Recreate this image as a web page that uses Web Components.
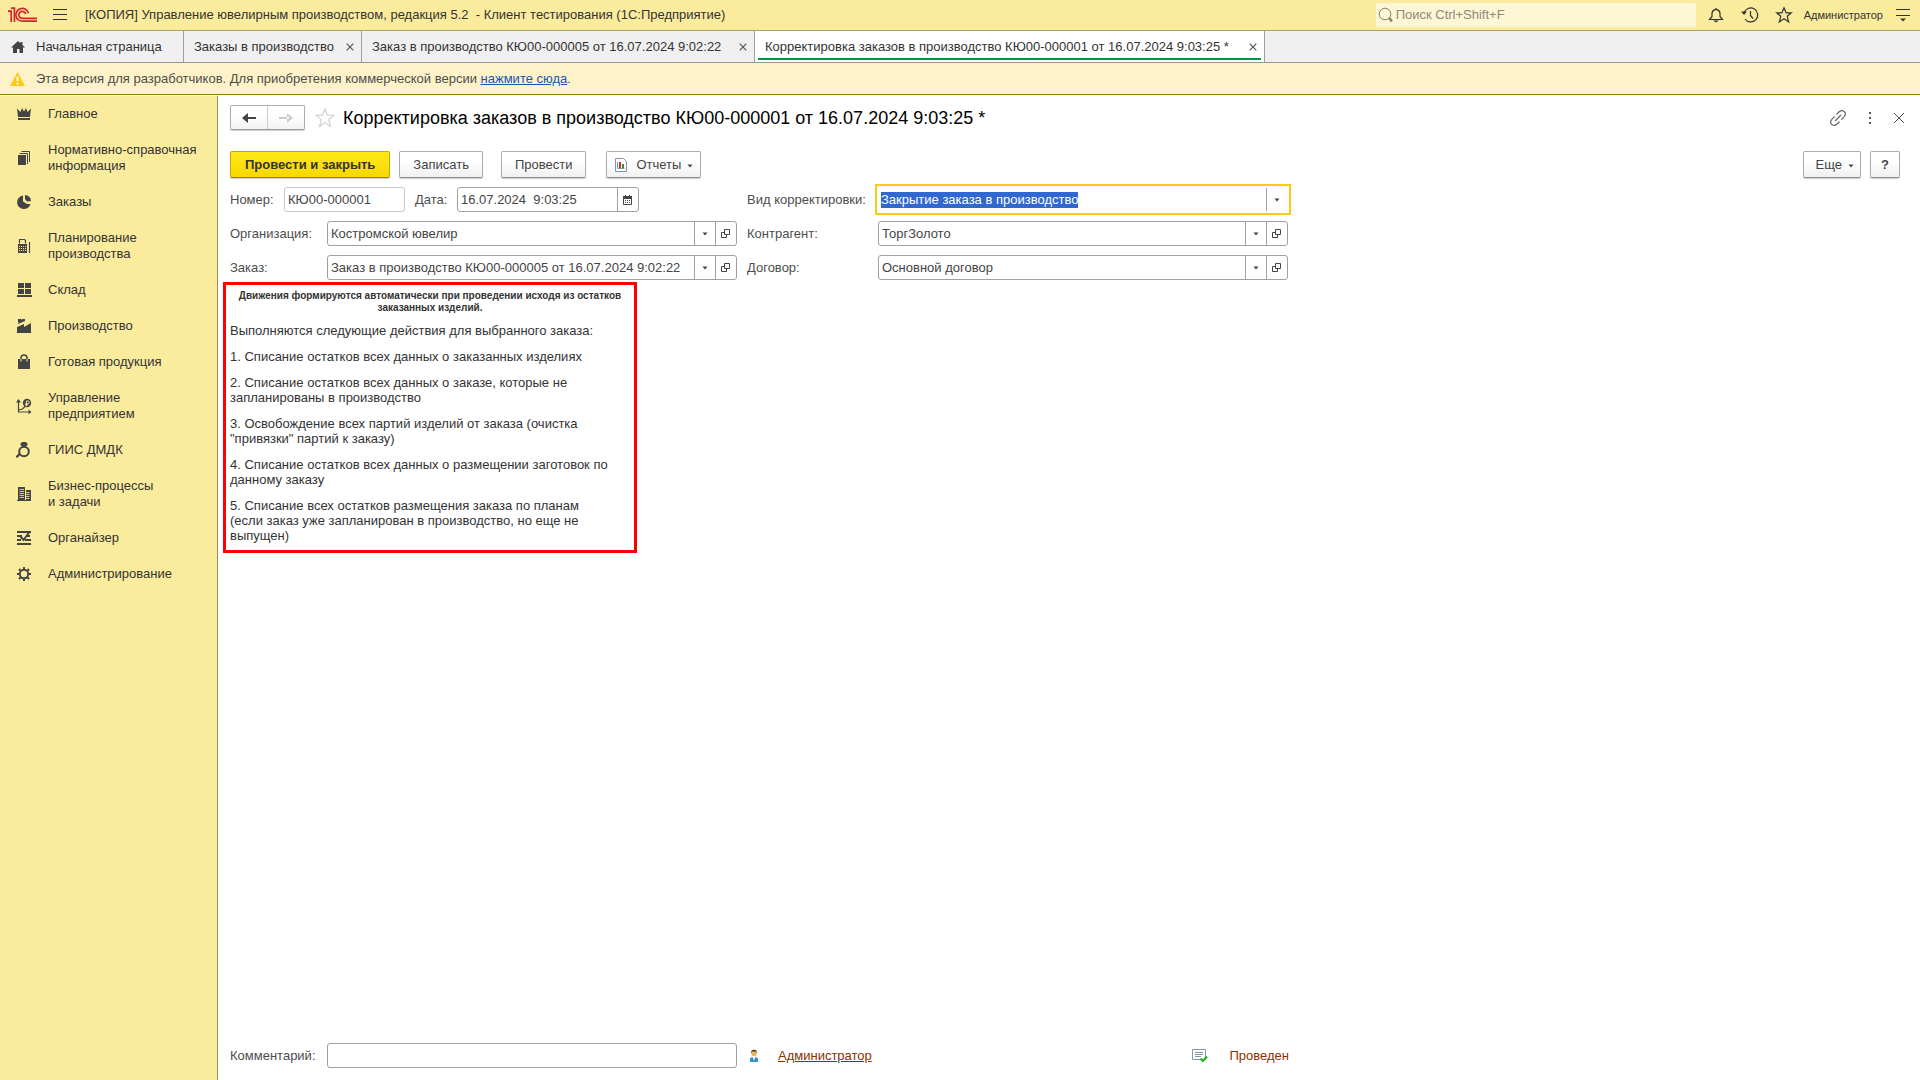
<!DOCTYPE html>
<html lang="ru">
<head>
<meta charset="utf-8">
<title>Корректировка заказов в производство</title>
<style>
html, body { height: 100%; margin: 0; }
body { font: 13px/16px "Liberation Sans", Arial, sans-serif; color: #333; background: #fff; }
</style>
</head>
<body>
<erp-app></erp-app>
<script>
const ICONS = {
  logo: [30, 16, '<g fill="none" stroke="#d8232a" stroke-width="1.7"><path d="M0 4.2h3.2V15M3 1.2h3.4V15"/><path d="M20.5 6.3A6.4 6.4 0 1 0 15 14.2H29"/><path d="M17.7 7.2A3.5 3.5 0 1 0 15 11.3H29"/></g>'],
  menu: [14, 12, '<path d="M0 .5h14M0 5.500h14M0 10.500h14" stroke="#333" fill="none"/>'],
  home: [16, 14, '<path fill="#444" d="M8 1 1 7.500h2V13h4V9h2.500v4H13V7.500h2L12.500 5V2h-2v1.300z"/>'],
  warn: [16, 14, '<path fill="#fccb1a" d="M7.500 0 15 14H0z"/><path d="M7.500 4.500v4.500M7.500 10.500v2" stroke="#fff" stroke-width="1.8"/>'],
  search: [16, 16, '<g fill="none" stroke="#85806a"><circle cx="7" cy="7" r="5.800"/><path d="m11 11 3 3.500" stroke-width="2.400"/></g>'],
  bell: [16, 16, '<path d="M1.500 12.500h13l-2.500-3V6.500C12 4 10 3 8.800 2.700a.8.8 0 0 0-1.600 0C6 3 4 4 4 6.500v3z" fill="none" stroke="#333" stroke-width="1.200"/><path d="M5 13.500h6L8 15.500z" fill="#333"/>'],
  history: [18, 16, '<path d="M3 6a7 7 0 1 1 1 6M9.500 4v4.500l2.500 3" fill="none" stroke="#333" stroke-width="1.200"/><path d="M0 4.500h6L3 8z" fill="#333"/>'],
  star: [18, 18, '<path d="m9 1.800 2.100 5h5.200l-4.100 3.500 1.500 5.600L9 12.800l-4.700 3.100 1.500-5.600L1.700 6.800h5.200z" fill="none" stroke="#333" stroke-width="1.200"/>'],
  starPale: [22, 22, '<path d="m11 2 2.400 6.300h6.300l-5 4.300 1.800 6.900L11 15.600l-5.500 3.900 1.800-6.900-5-4.300h6.300z" fill="none" stroke="#ccc" stroke-width="1.100"/>'],
  more: [14, 14, '<path d="M0 1.500h14M0 7.500h14" stroke="#333" stroke-width="1.200"/><path d="M4 10.500h6l-3 3z" fill="#333"/>'],
  link: [18, 18, '<g fill="none" stroke="#666" stroke-width="1.200"><path d="m7.500 5.500 2.700-2.700c3.600-3.300 8.200 1.200 5 4.800l-3 3M10.500 12.500l-2.700 2.700c-3.600 3.300-8.200-1.200-5-4.800l3-3M6 12l6-6"/></g>'],
  dots: [4, 12, '<path d="M1 0h2v2H1zM1 5h2v2H1zM1 10h2v2H1z" fill="#555"/>'],
  close: [12, 12, '<path d="m1 1 10 10M11 1 1 11" stroke="#555"/>'],
  x: [8, 8, '<path d="m.7.7 6.600 6.600M7.300.7.7 7.300" stroke="#555" stroke-width="1.200"/>'],
  back: [16, 12, '<path d="M1 6 7 1v10zM5 5h10v2H5z" fill="#444"/>'],
  forward: [16, 12, '<path d="m15 6-6-5v10zM1 5h10v2H1z" fill="#ccc"/>'],
  report: [14, 14, '<path d="M1.500.5h8l3 3v10h-11z" fill="#fff" stroke="#8494a4"/><path d="M3.500 4v6.500h7" fill="none" stroke="#8494a4"/><path d="M5 4h2v6H5z" fill="#e02a20"/><path d="M8 6h2v4H8z" fill="#1e9a28"/>'],
  down: [6, 4, '<path d="M.5.5h5L3 3.500z" fill="#444"/>'],
  calendar: [10, 10, '<path d="M.5 1.500h8v8h-8z" fill="none" stroke="#444"/><path d="M0 1h9v3H0zM2 0h1v2H2zM6 0h1v2H6zM2 5h1v1H2zM4 5h1v1H4zM6 5h1v1H6zM2 7h1v1H2zM4 7h1v1H4zM6 7h1v1H6z" fill="#444"/>'],
  open: [10, 10, '<path d="M3.500.5h5v5h-5z M3 3.500H.5v5h5V6" fill="none" stroke="#444"/>'],
  user: [14, 14, '<path d="M3 13V9.500L5 8h4l2 1.500V13z" fill="#3a8fc4"/><path d="m5.500 8 1.500 3.500L8.500 8z" fill="#fff"/><circle cx="7" cy="4.500" r="2.800" fill="#eeb45c"/><path d="M3.800 4.500C3.500-.5 10.500-.5 10.200 4.500L9 2.500H5z" fill="#3d3428"/>'],
  posted: [16, 14, '<path d="M.5.5h13v10H.5z" fill="#fff" stroke="#8598aa"/><path d="M3 3.500h8M3 5.500h8M3 7.500h6" stroke="#8598aa"/><path d="m8.500 9.500 2.300 2.500 4.200-4.500" fill="none" stroke="#25b32c" stroke-width="2.200"/>'],
  crown: [16, 16, '<path d="M1 2.500 4.500 6 6 2l2 3.500L10 2l1.500 4L15 2.500 14 11H2zM2 12h12v2H2z"/>'],
  books: [16, 16, '<path d="M2 5h8v10H2z"/><path d="M3.500 3.500h8V14M5.500 1.500h8V12" fill="none" stroke="#444"/>'],
  pie: [16, 16, '<path d="M7 1.500a6.800 6.800 0 1 0 7.500 8.500H11L7 7.500z"/><path d="M9 1a6 6 0 0 1 6 6l-4 .5L9 5z"/>'],
  calc: [16, 16, '<path d="M2 6h9v9H2z"/><path d="M3.500 5.500v-4h5l1 1v3M13.500 4v11" fill="none" stroke="#444" stroke-width="1.200"/><path d="M3 8h1v1H3zM5 8h1v1H5zM7 8h1v1H7zM9 8h1v1H9zM3 10h1v1H3zM5 10h1v1H5zM7 10h1v1H7zM9 10h1v1H9zM3 12h1v1H3zM5 12h1v1H5zM7 12h1v1H7zM9 12h1v1H9z" fill="#fbec9d"/>'],
  store: [16, 16, '<path d="M2 1h6v5H2zM9 1h6v5H9zM2 7h6v5H2zM9 7h6v5H9zM1 13h15v2H1z"/>'],
  factory: [16, 16, '<path d="M2 1h3v3H2zM6 1h3v2L2 6V5zM1 15V9l7-3v3l7-4v10z"/>'],
  bag: [16, 16, '<path d="M2 5h12v10H2z"/><path d="M5 6V4c0-4 6-4 6 0v2" fill="none" stroke="#444" stroke-width="1.500"/><path d="M5 5v2.500M11 5v2.500" stroke="#fbec9d"/>'],
  chart: [16, 16, '<path d="M2.500 2v12H14M2.500 12l4-1 3-3" fill="none" stroke="#444" stroke-width="1.200"/><path d="M0 4.500h5L2.500 1zM12.500 11.500 15.500 14l-3 2.300z"/><circle cx="11" cy="5" r="4.200"/><path d="M10.500 8V3H12a1.400 1.400 0 0 1 0 2.800H9M9 7h3" fill="none" stroke="#fbec9d" stroke-width=".9"/>'],
  ring: [16, 16, '<circle cx="8" cy="9.500" r="4.800" fill="none" stroke="#444" stroke-width="2"/><path d="M6 0h4l2 2.500L8 6 4 2.500zM0 14l3-3 1.500 1.500L2 15.500H0z"/>'],
  building: [16, 16, '<path d="M2 1h7v13H2zM10 4h5v10h-5zM1 14h14v1H1z"/><path d="M3.500 3.500H8M3.500 5.500H8M3.500 7.500H8M3.500 9.500H8M3.500 11.500H8M10 6.500h3.500M10 8.500h3.500M10 10.500h3.500M10 12.500h3.500" stroke="#fbec9d" stroke-width=".8"/>'],
  organizer: [16, 16, '<path d="M1 1h14v2H1zM1 5h5v2H1zM11 5h3v2h-3zM1 9h4v2H1zM9 9h6v2H9zM1 13h14v2H1z"/><path d="m4.500 6.500 3 3.500 6-8" fill="none" stroke="#444" stroke-width="2"/>'],
  gear: [16, 16, '<circle cx="8" cy="8" r="4.200" fill="none" stroke="#444" stroke-width="1.900"/><path d="M8 1v3M8 12v3M1 8h3M12 8h3M3 3l2 2M11 11l2 2M13 3l-2 2M5 11l-2 2" stroke="#444" stroke-width="2"/>']
};

const RESET = `<style>
*, *::before { box-sizing: border-box; }
button, input { font: inherit; color: inherit; margin: 0; }
button { padding: 0; border: 0; background: none; display: flex; align-items: center; justify-content: center; }
</style>`;

function define(name, render, ready) {
  customElements.define(name, class extends HTMLElement {
    connectedCallback() {
      if (this.shadowRoot) return;
      const root = this.attachShadow({ mode: 'open' });
      root.innerHTML = RESET + render(this);
      if (ready) ready(root, this);
    }
  });
}
const attr = (el, n, d = '') => el.getAttribute(n) ?? d;

define('erp-icon', el => {
  const [w, h, body] = ICONS[attr(el, 'name')];
  return `<style>:host{display:inline-flex;flex:none}svg{display:block;fill:#444}</style>
  <svg width="${w}" height="${h}" viewBox="0 0 ${w} ${h}" aria-hidden="true">${body}</svg>`;
});

define('erp-header', () => `<style>
:host { display: flex; align-items: center; height: 31px; padding: 0 10px 0 8px; background: #fbec9d; border-bottom: 1px solid #a9a263; }
.menu { margin: 0 17px 0 14px; width: 16px; }
.title { white-space: pre; flex: 1; }
.search { display: flex; align-items: center; width: 320px; height: 24px; padding-left: 2px; margin-right: 11px; background: #fdf7d6; border-radius: 2px; }
.search input { flex: 1; min-width: 0; border: 0; padding: 0 2px; background: none; outline: 0; }
.search input::placeholder { color: #8d8a78; opacity: 1; }
.tools { display: flex; align-items: center; gap: 16px; }
.tools button { width: 18px; }
.user { margin: 0 13px 0 11px; font-size: 11px; }
</style>
<erp-icon name="logo"></erp-icon>
<button class="menu" aria-label="Меню"><erp-icon name="menu"></erp-icon></button>
<span class="title">[КОПИЯ] Управление ювелирным производством, редакция 5.2  - Клиент тестирования (1С:Предприятие)</span>
<label class="search"><erp-icon name="search"></erp-icon><input type="text" aria-label="Поиск" placeholder="Поиск Ctrl+Shift+F"></label>
<span class="tools">
<button aria-label="Уведомления"><erp-icon name="bell"></erp-icon></button>
<button aria-label="История"><erp-icon name="history"></erp-icon></button>
<button aria-label="Избранное"><erp-icon name="star"></erp-icon></button>
</span>
<button class="user">Администратор</button>
<button aria-label="Настройки"><erp-icon name="more"></erp-icon></button>`);

define('erp-tab', el => `<style>
:host { display: flex; align-items: center; box-sizing: border-box; min-width: var(--tab, auto); padding: 0 7px 0 10px; border-right: 1px solid #a0a0a0; position: relative; white-space: nowrap; }
:host([active]) { background: #fff; }
:host([active])::after { content: ""; position: absolute; left: 3px; right: 3px; bottom: 2px; height: 2px; background: #009646; }
.home { margin-right: 10px; }
.close { margin-left: auto; height: 16px; }
</style>
${el.hasAttribute('home') ? '<erp-icon class="home" name="home"></erp-icon>' : ''}
<button><slot></slot></button>
${el.hasAttribute('home') ? '' : '<button class="close" aria-label="Закрыть вкладку"><erp-icon name="x"></erp-icon></button>'}`);

define('erp-tabs', () => `<style>
:host { display: flex; height: 32px; box-sizing: border-box; background: #f0f0f0; border-bottom: 1px solid #969696; }
</style><slot></slot>`);

define('erp-notice', () => `<style>
:host { display: flex; align-items: center; gap: 10px; height: 32px; box-sizing: border-box; padding-left: 10px; background: #fdf2c8; border-bottom: 1px solid #96780f; color: #4d4d4d; }
a { color: #1c55ae; }
</style><erp-icon name="warn"></erp-icon>
<span>Эта версия для разработчиков. Для приобретения коммерческой версии <a href="#">нажмите сюда</a>.</span>`);

define('erp-nav-item', el => `<style>
:host { display: block; }
a { display: flex; align-items: center; gap: 16px; padding: 10px 0 10px 16px; color: inherit; text-decoration: none; }
</style><a href="#"><erp-icon name="${attr(el, 'icon')}"></erp-icon><span><slot></slot></span></a>`);

define('erp-sidebar', () => `<style>
:host { display: block; box-sizing: border-box; flex: none; width: 218px; background: #fbec9d; border-right: 1px solid #969058; border-top: 1px solid #fff; }
</style><nav><slot></slot></nav>`);

define('erp-button', el => `<style>
:host { display: inline-flex; height: 27px; }
button { width: 100%; padding: 0 var(--pad-end, var(--pad, 13px)) 0 var(--pad, 13px); gap: 8px; border: 1px solid #adadad; border-bottom-color: #8f8f8f; border-radius: 2px; background: linear-gradient(#fff 40%, #f0f0f0); box-shadow: 0 1px 1px #ccc; color: #444; white-space: nowrap; }
:host([primary]) button { --pad: 14px; font-weight: bold; color: #333; border-color: #c4a800; border-bottom-color: #998200; background: linear-gradient(#ffe81a, #f7d800); }
.arrow { padding-top: 2px; margin-left: -2px; }
</style>
<button>${el.hasAttribute('icon') ? `<erp-icon name="${attr(el, 'icon')}"></erp-icon>` : ''}<span><slot></slot></span>${el.hasAttribute('menu') ? '<erp-icon class="arrow" name="down"></erp-icon>' : ''}</button>`);

define('erp-field', el => `<style>
:host { display: flex; align-items: center; color: #4d4d4d; }
label { flex: none; width: var(--label, auto); white-space: nowrap; }
.box { display: flex; width: var(--box, 410px); height: 25px; border: 1px solid #a0a0a0; border-radius: 3px; background: #fff; }
:host([readonly]) .box { border-color: #c8c8c8; }
:host([focused]) .box { height: 31px; margin: -3px; width: calc(var(--box, 410px) + 6px); border: 2px solid #fccb1a; border-radius: 0; padding: 2px 2px 2px 1px; }
input { flex: 1; min-width: 0; padding: 0 3px; border: 0; outline: 0; background: none; color: #444; }
input::selection { background: #3067d0; color: #fff; }
.box button { flex: none; width: 21px; border-left: 1px solid #a0a0a0; }
</style>
<label for="v">${attr(el, 'label')}</label>
<span class="box"><input id="v" type="text" value="${attr(el, 'value')}"${el.hasAttribute('readonly') ? ' readonly' : ''}>
${attr(el, 'tools').split(' ').filter(Boolean).map(t => `<button aria-label="${{ down: 'Выбрать', open: 'Открыть', calendar: 'Календарь' }[t]}"><erp-icon name="${t}"></erp-icon></button>`).join('')}</span>`,
(root, el) => {
  if (el.hasAttribute('focused')) { const i = root.querySelector('input'); i.focus(); i.select(); }
});

define('erp-title-bar', () => `<style>
:host { display: flex; align-items: center; height: 25px; }
.nav { display: flex; height: 25px; border: 1px solid #adadad; border-bottom-color: #999; border-radius: 2px; background: linear-gradient(#fff 40%, #f2f2f2); box-shadow: 0 1px 1px #ccc; }
.nav button { width: 36px; }
.nav button:first-child { width: 37px; border-right: 1px solid #ccc; }
.star { margin: 0 7px 0 9px; }
h1 { flex: 1; margin: 0; font-size: 18px; line-height: 24px; font-weight: normal; color: #000; }
.tools { display: flex; align-items: center; gap: 21px; padding-right: 15px; }
</style>
<span class="nav"><button aria-label="Назад"><erp-icon name="back"></erp-icon></button><button aria-label="Вперед" disabled><erp-icon name="forward"></erp-icon></button></span>
<button class="star" aria-label="В избранное"><erp-icon name="starPale"></erp-icon></button>
<h1><slot></slot></h1>
<span class="tools"><button aria-label="Ссылка"><erp-icon name="link"></erp-icon></button><button aria-label="Еще"><erp-icon name="dots"></erp-icon></button><button aria-label="Закрыть"><erp-icon name="close"></erp-icon></button></span>`);

define('erp-info', () => `<style>
:host { display: block; box-sizing: border-box; width: 414px; margin: 2px 0 0 -7px; padding: 5px 4px 7px; border: 3px solid #f00; color: #333; line-height: 15px; }
h2 { margin: 0 0 9px; font-size: 10px; line-height: 12px; font-weight: bold; text-align: center; }
::slotted(p) { margin: 0 0 11px !important; }
::slotted(p:last-child) { margin: 0 !important; }
</style><h2>Движения формируются автоматически при проведении исходя из остатков<br>заказанных изделий.</h2><slot></slot>`);

define('erp-footer', () => `<style>
:host { display: flex; align-items: center; width: 1059px; margin-top: auto; color: #4d4d4d; }
erp-field { --label: 97px; }
.user { margin: 0 17px 0 10px; }
a { color: #8c3000; }
.state { display: flex; align-items: center; gap: 21px; margin-left: auto; color: #8c3000; }
</style>
<erp-field label="Комментарий:"></erp-field>
<erp-icon class="user" name="user"></erp-icon><a href="#">Администратор</a>
<span class="state"><erp-icon name="posted"></erp-icon>Проведен</span>`);

define('erp-document', () => `<style>
:host { display: flex; box-sizing: border-box; flex-direction: column; flex: 1; min-width: 0; padding: 10px 0 12px 12px; }
.commands { display: flex; padding: 0 20px 0 0; margin: 21px 0 9px; }
.commands .save { margin-left: 9px; }
.commands .post { margin: 0 20px 0 18px; }
.reports { --pad: 7px; }
.commands .more { --pad: 12px; --pad-end: 6px; margin: 0 9px 0 auto; }
.help { --pad: 10px; font-weight: bold; }
.form { display: grid; grid-template-columns: 507px auto; justify-content: start; column-gap: 10px; row-gap: 9px; }
.left { --label: 97px; }
.right { --label: 131px; }
.first { display: flex; gap: 10px; }
.number { --label: 54px; --box: 121px; }
.date { --label: 42px; --box: 182px; }
</style>
<erp-title-bar>Корректировка заказов в производство КЮ00-000001 от 16.07.2024 9:03:25 *</erp-title-bar>
<div class="commands">
<erp-button primary>Провести и закрыть</erp-button>
<erp-button class="save">Записать</erp-button>
<erp-button class="post">Провести</erp-button>
<erp-button class="reports" icon="report" menu>Отчеты</erp-button>
<erp-button class="more" menu>Еще</erp-button>
<erp-button class="help">?</erp-button>
</div>
<div class="form">
<div class="first"><erp-field class="number" label="Номер:" value="КЮ00-000001" readonly></erp-field><erp-field class="date" label="Дата:" value="16.07.2024  9:03:25" tools="calendar"></erp-field></div>
<erp-field class="right" label="Вид корректировки:" value="Закрытие заказа в производство" tools="down" focused></erp-field>
<erp-field class="left" label="Организация:" value="Костромской ювелир" tools="down open"></erp-field>
<erp-field class="right" label="Контрагент:" value="ТоргЗолото" tools="down open"></erp-field>
<erp-field class="left" label="Заказ:" value="Заказ в производство КЮ00-000005 от 16.07.2024 9:02:22" tools="down open"></erp-field>
<erp-field class="right" label="Договор:" value="Основной договор" tools="down open"></erp-field>
</div>
<erp-info>
<p>Выполняются следующие действия для выбранного заказа:</p>
<p>1. Списание остатков всех данных о заказанных изделиях</p>
<p>2. Списание остатков всех данных о заказе, которые не<br>запланированы в производство</p>
<p>3. Освобождение всех партий изделий от заказа (очистка<br>"привязки" партий к заказу)</p>
<p>4. Списание остатков всех данных о размещении заготовок по<br>данному заказу</p>
<p>5. Списание всех остатков размещения заказа по планам<br>(если заказ уже запланирован в производство, но еще не<br>выпущен)</p>
</erp-info>
<erp-footer></erp-footer>`);

define('erp-app', () => `<style>
:host { display: flex; flex-direction: column; min-height: 100vh; }
main { display: flex; flex: 1; }
.start { --tab: 184px; }
.list { --tab: 178px; }
.order { --tab: 393px; }
.current { --tab: 510px; }
</style>
<erp-header></erp-header>
<erp-tabs>
<erp-tab class="start" home>Начальная страница</erp-tab>
<erp-tab class="list">Заказы в производство</erp-tab>
<erp-tab class="order">Заказ в производство КЮ00-000005 от 16.07.2024 9:02:22</erp-tab>
<erp-tab class="current" active>Корректировка заказов в производство КЮ00-000001 от 16.07.2024 9:03:25 *</erp-tab>
</erp-tabs>
<erp-notice></erp-notice>
<main>
<erp-sidebar>
<erp-nav-item icon="crown">Главное</erp-nav-item>
<erp-nav-item icon="books">Нормативно-справочная<br>информация</erp-nav-item>
<erp-nav-item icon="pie">Заказы</erp-nav-item>
<erp-nav-item icon="calc">Планирование<br>производства</erp-nav-item>
<erp-nav-item icon="store">Склад</erp-nav-item>
<erp-nav-item icon="factory">Производство</erp-nav-item>
<erp-nav-item icon="bag">Готовая продукция</erp-nav-item>
<erp-nav-item icon="chart">Управление<br>предприятием</erp-nav-item>
<erp-nav-item icon="ring">ГИИС ДМДК</erp-nav-item>
<erp-nav-item icon="building">Бизнес-процессы<br>и задачи</erp-nav-item>
<erp-nav-item icon="organizer">Органайзер</erp-nav-item>
<erp-nav-item icon="gear">Администрирование</erp-nav-item>
</erp-sidebar>
<erp-document></erp-document>
</main>`);
</script>
</body>
</html>
